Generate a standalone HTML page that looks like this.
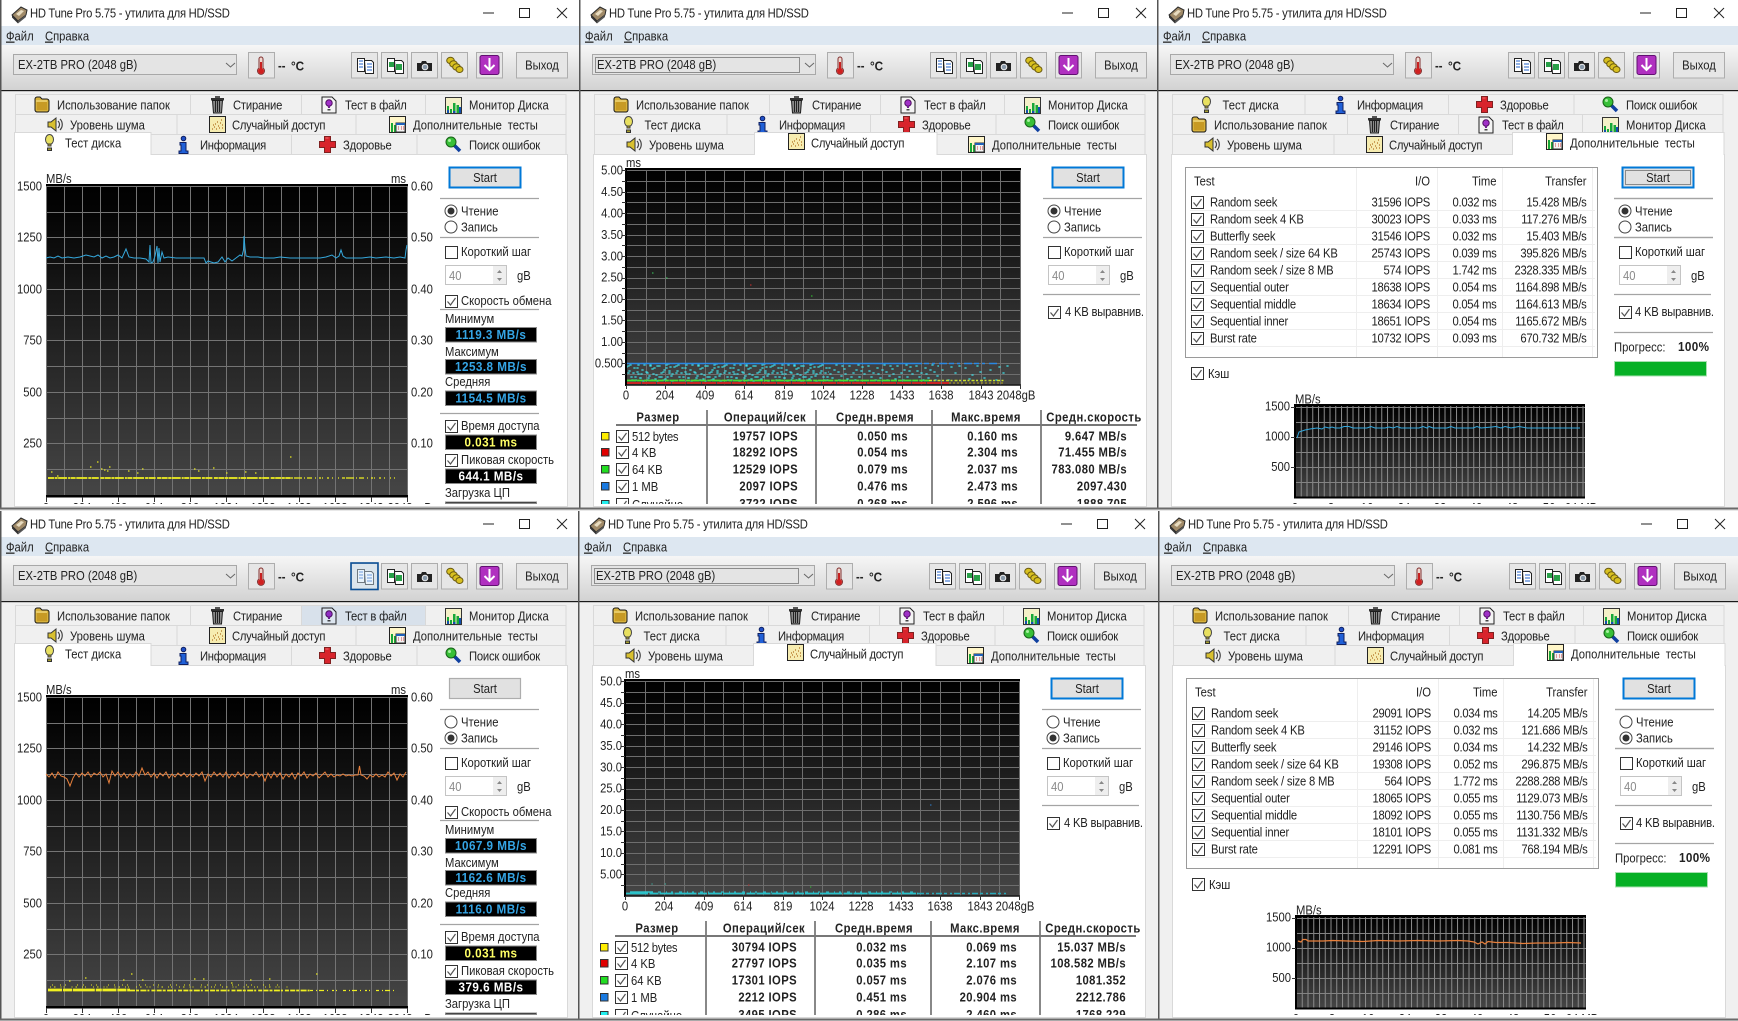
<!DOCTYPE html>
<html lang="ru"><head><meta charset="utf-8"><title>HD Tune Pro 5.75</title>
<style>
html,body{margin:0;padding:0;background:#e8e8e8;width:1738px;height:1021px;overflow:hidden}
svg{display:block;filter:blur(.35px)}
text{font:12.5px "Liberation Sans","Noto Sans CJK SC",sans-serif;fill:#222;transform-box:fill-box;transform:scaleX(.9);transform-origin:0 50%}
.e{text-anchor:end;transform-origin:100% 50%}
.m{text-anchor:middle;transform-origin:50% 50%}
.b{font-weight:bold}
.n{letter-spacing:-.3px}
.bn{font-weight:bold;letter-spacing:.45px}
.v{font-weight:bold;font-size:13px;letter-spacing:.5px}
.g{fill:#8a8a8a}
.bl{fill:#35a5e5}.ye{fill:#ffff66}.wh{fill:#fff}
.s{letter-spacing:-.32px}
.q{letter-spacing:-.22px}
</style></head><body>
<svg xmlns="http://www.w3.org/2000/svg" width="1738" height="1021" viewBox="0 0 1738 1021">
<defs>
<linearGradient id="tb" x1="0" y1="0" x2="0" y2="1"><stop offset="0" stop-color="#f6f6f6"/><stop offset="1" stop-color="#d2d2d2"/></linearGradient>
<linearGradient id="dk" x1="0" y1="0" x2="0" y2="1"><stop offset="0" stop-color="#000"/><stop offset=".1" stop-color="#050505"/><stop offset="1" stop-color="#464646"/></linearGradient>
<clipPath id="cl"><rect x="0" y="150" width="580" height="354"/></clipPath>
<pattern id="p1" width="48" height="19" patternUnits="userSpaceOnUse" x="47" y="364"><path d="M2 2h1M7 9h1M11 4h1M14 14h1M18 1h1M20 8h1M23 12h1M26 5h1M29 15h1M31 2h1M35 9h1M38 6h1M41 13h1M44 3h1M46 10h1M5 13h1M9 16h1M16 6h1M24 2h1M33 13h1M40 1h1M12 10h1M27 10h1M3 7h1M37 16h1M21 16h1M43 7h1" stroke="#3de0e8" stroke-width="1.300" stroke-linecap="square"/></pattern>
<pattern id="p1b" width="48" height="19" patternUnits="userSpaceOnUse" x="66" y="371"><path d="M2 2h1M7 9h1M11 4h1M14 14h1M18 1h1M20 8h1M23 12h1M26 5h1M29 15h1M31 2h1M35 9h1M38 6h1M41 13h1M44 3h1M46 10h1M5 13h1M9 16h1M16 6h1M24 2h1M33 13h1M40 1h1M12 10h1M27 10h1M3 7h1M37 16h1M21 16h1M43 7h1" stroke="#3de0e8" stroke-width="1.300" stroke-linecap="square"/></pattern>
<pattern id="p2" width="48" height="19" patternUnits="userSpaceOnUse" x="47" y="364"><path d="M3 4h1M10 11h1M15 2h1M22 14h1M28 6h1M34 16h1M41 9h1M45 2h1M18 8h1M7 15h1M37 3h1" stroke="#3de0e8" stroke-width="1.200" stroke-linecap="square"/></pattern>
<pattern id="vs" width="5.75" height="110" patternUnits="userSpaceOnUse" x="138" y="404"><path d="M.5 0V110" stroke="#8c8c8c" stroke-width="1"/></pattern>

<!-- icons -->
<g id="hdd"><path d="M1 10 10 2l6 3-1 5-8 6z" fill="#a08a68" stroke="#2a2a2a"/><path d="M5 9l5-4 3 1-5 5z" fill="#e8dcc0"/><path d="M1 10l6 6v2.500l-6-6z" fill="#333"/><path d="M7 16l8-6v2l-8 6.500z" fill="#555"/></g>
<g id="folder"><path d="M1 3C1 2 2 1 3 1h3l2 2h5c1 0 2 1 2 2v9c0 1-1 2-2 2H3c-1 0-2-1-2-2z" fill="#d8b23c" stroke="#1a1a1a"/><path d="M3 6h10v8H3z" fill="#c79a24"/><path d="M2 5h11" stroke="#f6e390"/></g>
<g id="trash"><path d="M1 2h13v2.500H1z" fill="#333"/><path d="M5 0h5v2H5z" fill="#555"/><path d="M2.500 4.500h10L11.500 17h-8z" fill="#8a8a8a" stroke="#1c1c1c"/><path d="M5.500 5v11M7.500 5v11M9.500 5v11" stroke="#222"/></g>
<g id="file"><path d="M1 1h10l4 4v12H1z" fill="#f4f4f4" stroke="#222"/><circle cx="8" cy="7" r="3.200" fill="#a030c8" stroke="#501060"/><path d="M7 10h2v2H7z" fill="#702090"/><path d="M6.500 13h3v1.500h-3z" fill="#444"/></g>
<g id="mon"><rect x=".5" y=".5" width="16" height="16" fill="#f4f0c8" stroke="#333"/><path d="M2 16V9h2v7zM5 16v-4h2v4zM8 16V6h2.500v10zM11.500 16V8H14v8z" fill="#18a838"/><path d="M2 16v-3h2v3zM8 16v-2h2.500v2z" fill="#1050b0"/><path d="M14 16v-6h2v6z" fill="#1050b0"/></g>
<g id="spk"><path d="M1 5h3l5-4v13L4 10H1z" fill="#d8c030" stroke="#333"/><path d="M11 4c2 2 2 5 0 7M13 2c3 3 3 8 0 11" fill="none" stroke="#444" stroke-width="1.200"/></g>
<g id="rand"><rect x=".5" y=".5" width="16" height="16" fill="#f6ecb0" stroke="#222"/><path d="M3 13h1M5 11h1M7 13h1M6 8h1M9 10h1M11 7h1M10 12h1M12 4h1M13 9h1M8 6h1M4 9h1M13 12h1" stroke="#b07020" stroke-width="1.200"/></g>
<g id="extra"><rect x=".5" y=".5" width="16" height="16" fill="#fff6c8" stroke="#222"/><path d="M2 16V7h2v9zM5 16V9h2v7z" fill="#18a838"/><path d="M7 7h9v9H7z" fill="#f4f4f4" stroke="#333"/><path d="M7 7h9v2H7z" fill="#2060b8"/><path d="M9 11h1M12 11h1M14 11h1M9 13h1M12 13h1M14 13h1" stroke="#d04040"/></g>
<g id="bulb"><ellipse cx="4.500" cy="5.500" rx="4" ry="5" fill="#e8e060" stroke="#444"/><path d="M3 10h3v2H3z" fill="#b8a820" stroke="#444"/><path d="M2.500 14h4v2.500h-4z" fill="#a8a030" stroke="#333"/></g>
<g id="info"><circle cx="4.500" cy="2.500" r="2.300" fill="#2050c8" stroke="#102060"/><path d="M1 6.500h6V15h2v2.500H0V15h2V9H1z" fill="#2060d8" stroke="#102060"/></g>
<g id="cross"><path d="M5.500 .5h6v5h5v6h-5v5h-6v-5h-5v-6h5z" fill="#d8242c" stroke="#802020"/><path d="M6.500 2h3" stroke="#f07070"/></g>
<g id="mag"><path d="M9 9l6 6" stroke="#1040a0" stroke-width="3.500"/><circle cx="6" cy="6" r="5" fill="#38c038" stroke="#186018"/><circle cx="4.500" cy="4.500" r="1.500" fill="#a8f0a0"/></g>
<g id="chk"><rect x=".5" y=".5" width="12" height="12" fill="#fff" stroke="#333"/><path d="M2.500 6.500l3 3.500 5-7" fill="none" stroke="#555" stroke-width="1.200"/></g>
<rect id="box" x=".5" y=".5" width="12" height="12" fill="#fff" stroke="#333"/>

<!-- window chrome -->
<g id="chrome">
<rect width="582" height="509" fill="#f0f0f0"/>
<rect width="582" height="26" fill="#fff"/>
<rect y="26" width="582" height="19" fill="#dde7f1"/>
<rect y="45" width="582" height="45" fill="url(#tb)"/>
<rect y="90" width="582" height="1.200" fill="#1a1a1a"/>
<rect y="0" width="1.500" height="509" fill="#555"/>
<rect y="507.500" width="582" height="2" fill="#6a6a6a"/>
<use href="#hdd" x="11" y="5"/>
<text x="30" y="17.500" style="letter-spacing:-.28px">HD Tune Pro 5.75 - утилита для HD/SSD</text>
<path d="M483 13h11M519.500 8.500h10v9h-10zM557 8l10 10M567 8l-10 10" fill="none" stroke="#222"/>
<text x="6" y="40.500"><tspan text-decoration="underline">Ф</tspan>айл</text>
<text x="45" y="40.500"><tspan text-decoration="underline">С</tspan>правка</text>
<rect x="13.500" y="54.500" width="223" height="20" fill="#e4e4e4" stroke="#a8a8a8"/>
<text x="18" y="69">EX-2TB PRO (2048 gB)</text>
<path d="M226 63l4.500 4 4.500-4" fill="none" stroke="#666"/>
<rect x="248.500" y="52.500" width="26" height="25.500" fill="#e6e6e6" stroke="#adadad"/>
<path d="M259 59a2 2 0 014 0v9a3.500 3.500 0 11-4 0z" fill="#f0d8d0" stroke="#803030"/><path d="M260 62h2v7h-2z" fill="#c82020"/><circle cx="261" cy="71" r="3" fill="#d02020"/>
<text x="278" y="70" class="b">--</text><text x="291" y="70.500" class="b" style="font-size:13px">°C</text>
<g fill="#e6e6e6" stroke="#adadad">
<rect x="351.500" y="52.500" width="26" height="25.500"/><rect x="381.500" y="52.500" width="26" height="25.500"/><rect x="411.500" y="52.500" width="26" height="25.500"/><rect x="441.500" y="52.500" width="26" height="25.500"/><rect x="476.500" y="52.500" width="26" height="25.500"/><rect x="516.500" y="52.500" width="51" height="25.500"/>
</g>
<path d="M357.500 58.500h7v13h-7z" fill="#fff" stroke="#222"/><path d="M364.500 60.500h7l2 2v11h-8z" fill="#fff" stroke="#222"/><path d="M359 61h4M359 64h4M359 67h4M367 64h5M367 67h5M367 70h5" stroke="#2060c8"/>
<path d="M387.500 58.500h7v13h-7z" fill="#fff" stroke="#222"/><path d="M394.500 60.500h7l2 2v11h-8z" fill="#fff" stroke="#222"/><path d="M389 62h5v5h-5zM396 64h6v6h-6z" fill="#28a048"/>
<path d="M417 63h4l1-2h4l1 2h5v8h-15z" fill="#222"/><circle cx="425" cy="67" r="2.800" fill="#8898a8" stroke="#eee"/>
<g fill="#d8c020" stroke="#6a5a10"><ellipse cx="450.500" cy="60.500" rx="3.800" ry="3.200"/><ellipse cx="453.500" cy="64" rx="3.800" ry="3.200"/><ellipse cx="456.500" cy="67" rx="3.800" ry="3.200"/><ellipse cx="459.500" cy="69.500" rx="3.500" ry="3"/></g>
<rect x="480" y="55.500" width="19" height="19" rx="2" fill="#b030c0" stroke="#601070"/><path d="M489.500 58v12M484.500 65l5 5 5-5" fill="none" stroke="#fff" stroke-width="2"/>
<text x="542" y="69.500" class="m">Выход</text>
<rect x="14.500" y="154.500" width="553" height="352" fill="#fff" stroke="#d9d9d9"/>
</g>

<!-- tab rows -->
<g id="ta"><rect x="15.500" y=".5" width="550.500" height="20" fill="#f0f0f0" stroke="#d9d9d9"/><path d="M190.500 .5v20M301.500 .5v20M425.500 .5v20" stroke="#d9d9d9"/>
<use href="#folder" x="34" y="2"/><text x="57" y="15.500">Использование папок</text>
<use href="#trash" x="210" y="2"/><text x="233" y="15.500" class="q">Стирание</text>
<use href="#file" x="321" y="2"/><text x="345" y="15.500" class="q">Тест в файл</text>
<use href="#mon" x="445" y="3"/><text x="469" y="15.500">Монитор Диска</text></g>
<g id="tbr"><rect x="15.500" y=".5" width="550.500" height="20" fill="#f0f0f0" stroke="#d9d9d9"/><path d="M177 .5v20M356 .5v20" stroke="#d9d9d9"/>
<use href="#spk" x="47" y="3"/><text x="70" y="15.500">Уровень шума</text>
<use href="#rand" x="209" y="2"/><text x="232" y="15.500" class="s">Случайный доступ</text>
<use href="#extra" x="389" y="2"/><text x="413" y="15.500" style="word-spacing:3px">Дополнительные тесты</text></g>
<g id="tc"><rect x="15.500" y=".5" width="550.500" height="20" fill="#f0f0f0" stroke="#d9d9d9"/><path d="M148 .5v20M291.500 .5v20M417 .5v20" stroke="#d9d9d9"/>
<use href="#bulb" x="45" y="2"/><text x="65.500" y="15.500">Тест диска</text>
<use href="#info" x="179" y="2"/><text x="200" y="15.500" class="s">Информация</text>
<use href="#cross" x="319" y="2"/><text x="343" y="15.500" class="q">Здоровье</text>
<use href="#mag" x="445" y="2"/><text x="469" y="15.500" class="q">Поиск ошибок</text></g>
<g id="r3a"><rect x="151" y=".5" width="415" height="20" fill="#f0f0f0" stroke="#d9d9d9"/><path d="M291.500 .5v20M417 .5v20" stroke="#d9d9d9"/>
<path d="M14.500 20.500V-1.500H151V20.500" fill="#fff" stroke="#d9d9d9"/><rect x="15" y="18" width="135.500" height="3" fill="#fff"/>
<use href="#bulb" x="45" y="0"/><text x="65" y="13.500">Тест диска</text>
<use href="#info" x="179" y="2"/><text x="200" y="15.500" class="s">Информация</text>
<use href="#cross" x="319" y="2"/><text x="343" y="15.500" class="q">Здоровье</text>
<use href="#mag" x="445" y="2"/><text x="469" y="15.500" class="q">Поиск ошибок</text></g>
<g id="r3b"><rect x="15.500" y=".5" width="550.500" height="20" fill="#f0f0f0" stroke="#d9d9d9"/>
<path d="M175.500 20.500V-1.500H358V20.500" fill="#fff" stroke="#d9d9d9"/><rect x="176" y="18" width="181.500" height="3" fill="#fff"/>
<use href="#spk" x="47" y="3"/><text x="70" y="15.500">Уровень шума</text>
<use href="#rand" x="209" y="-1"/><text x="232" y="13.500" class="s">Случайный доступ</text>
<use href="#extra" x="389" y="2"/><text x="413" y="15.500" style="word-spacing:3px">Дополнительные тесты</text></g>
<g id="r3c"><rect x="15.500" y=".5" width="340" height="20" fill="#f0f0f0" stroke="#d9d9d9"/><path d="M177 .5v20" stroke="#d9d9d9"/>
<path d="M355.500 20.500V-1.500H567V20.500" fill="#fff" stroke="#d9d9d9"/><rect x="356" y="18" width="210.500" height="3" fill="#fff"/>
<use href="#spk" x="47" y="3"/><text x="70" y="15.500">Уровень шума</text>
<use href="#rand" x="209" y="2"/><text x="232" y="15.500" class="s">Случайный доступ</text>
<use href="#extra" x="389" y="-1"/><text x="413" y="13.500" style="word-spacing:3px">Дополнительные тесты</text></g>

<!-- right column -->
<g id="rc">
<path d="M440 198.500h99M440 237.500h99" stroke="#a4a4a4" stroke-width="1.200"/>
<circle cx="451" cy="211" r="6" fill="#fff" stroke="#444"/><circle cx="451" cy="227" r="6" fill="#fff" stroke="#444"/>
<text x="461" y="215.500">Чтение</text><text x="461" y="231.500">Запись</text>
<use href="#box" x="445" y="246"/><text x="461" y="256">Короткий шаг</text>
<rect x="445.500" y="265.500" width="61" height="19" fill="#fff" stroke="#c4c4c4"/><rect x="493" y="266" width="13" height="18" fill="#eee"/><path d="M497 273l2.500-3 2.500 3zM497 278l2.500 3 2.500-3z" fill="#888"/>
<text x="449" y="280" class="g">40</text><text x="517" y="280">gB</text>
</g>
<g id="k4"><path d="M440 294.500h97" stroke="#a4a4a4" stroke-width="1.200"/><use href="#chk" x="445" y="306"/><text x="462" y="316" class="q">4 KB выравнив.</text></g>
<g id="rs"><use href="#chk" x="445" y="295"/><text x="461" y="305">Скорость обмена</text><path d="M440 309.500h99M440 413.500h99" stroke="#a4a4a4" stroke-width="1.200"/>
<text x="445" y="323">Минимум</text><text x="445" y="356">Максимум</text><text x="445" y="386">Средняя</text>
<use href="#chk" x="445" y="420"/><text x="461" y="430">Время доступа</text><use href="#chk" x="445" y="454"/><text x="461" y="464">Пиковая скорость</text><text x="445" y="497">Загрузка ЦП</text>
<g fill="#000" stroke="#8a8a8a"><rect x="445.500" y="327.500" width="91" height="14.500"/><rect x="445.500" y="359.500" width="91" height="14.500"/><rect x="445.500" y="391" width="91" height="14.500"/><rect x="445.500" y="435" width="91" height="14.500"/><rect x="445.500" y="469" width="91" height="14.500"/><rect x="445.500" y="502" width="91" height="1.500"/></g>
</g>

<!-- chart 1 -->
<g id="c1">
<rect x="46" y="184" width="361" height="313" fill="url(#dk)"/>
<path d="M46.500 184V497M64.500 184V497M82.500 184V497M100.500 184V497M118.500 184V497M136.500 184V497M154.500 184V497M172.500 184V497M190.500 184V497M208.500 184V497M226.500 184V497M244.500 184V497M263.500 184V497M281.500 184V497M299.500 184V497M317.500 184V497M335.500 184V497M353.500 184V497M371.500 184V497M389.500 184V497M407.500 184V497M46 186.500H408M46 212.500H408M46 237.500H408M46 263.500H408M46 289.500H408M46 315.500H408M46 340.500H408M46 366.500H408M46 392.500H408M46 418.500H408M46 443.500H408M46 469.500H408M46 495.500H408" stroke="#747474"/>
<rect x="46" y="184" width="362" height="2" fill="#000"/><rect x="46" y="495" width="362" height="2.500" fill="#000"/>
<text x="46" y="183">MB/s</text><text x="406" y="183" class="e">ms</text>
<text x="42" y="190.500" class="e">1500</text><text x="42" y="241.500" class="e">1250</text><text x="42" y="293.500" class="e">1000</text><text x="42" y="344.500" class="e">750</text><text x="42" y="396.500" class="e">500</text><text x="42" y="447.500" class="e">250</text>
<text x="411" y="190.500">0.60</text><text x="411" y="241.500">0.50</text><text x="411" y="293.500">0.40</text><text x="411" y="344.500">0.30</text><text x="411" y="396.500">0.20</text><text x="411" y="447.500">0.10</text>
<g clip-path="url(#cl)"><path d="M46.500 497v5M82.500 497v5M118.500 497v5M154.500 497v5M190.500 497v5M226.500 497v5M263.500 497v5M299.500 497v5M335.500 497v5M371.500 497v5M407.500 497v5" stroke="#333"/>
<text x="46" y="512" class="m">0</text><text x="82" y="512" class="m">204</text><text x="118" y="512" class="m">409</text><text x="154" y="512" class="m">614</text><text x="190" y="512" class="m">819</text><text x="226" y="512" class="m">1024</text><text x="263" y="512" class="m">1228</text><text x="299" y="512" class="m">1433</text><text x="335" y="512" class="m">1638</text><text x="371" y="512" class="m">1843</text><text x="400" y="512" class="m">2048</text><text x="418" y="512">gB</text></g>
</g>

<!-- chart 2 grid -->
<g id="c2">
<rect x="47" y="168" width="394" height="217" fill="url(#dk)"/>
<path d="M47.500 168V385M67.500 168V385M86.500 168V385M106.500 168V385M126.500 168V385M145.500 168V385M165.500 168V385M185.500 168V385M205.500 168V385M224.500 168V385M244.500 168V385M264.500 168V385M283.500 168V385M303.500 168V385M323.500 168V385M342.500 168V385M362.500 168V385M382.500 168V385M402.500 168V385M421.500 168V385M441.500 168V385M47 170.500H442M47 181.500H442M47 192.500H442M47 202.500H442M47 213.500H442M47 224.500H442M47 235.500H442M47 245.500H442M47 256.500H442M47 267.500H442M47 278.500H442M47 288.500H442M47 299.500H442M47 310.500H442M47 320.500H442M47 331.500H442M47 342.500H442M47 353.500H442M47 363.500H442M47 374.500H442" stroke="#6e6e6e"/>
<rect x="47" y="168" width="395" height="2" fill="#000"/><rect x="46" y="168" width="2" height="218" fill="#000"/><rect x="46" y="384.500" width="396" height="1.200" fill="#000"/>
<path d="M43 170.500h4M43 181.500h4M43 192.500h4M43 202.500h4M43 213.500h4M43 224.500h4M43 235.500h4M43 245.500h4M43 256.500h4M43 267.500h4M43 278.500h4M43 288.500h4M43 299.500h4M43 310.500h4M43 320.500h4M43 331.500h4M43 342.500h4M43 353.500h4M43 363.500h4M43 374.500h4M47.500 385v4M86.500 385v4M126.500 385v4M165.500 385v4M205.500 385v4M244.500 385v4M283.500 385v4M323.500 385v4M362.500 385v4M402.500 385v4M441.500 385v4" stroke="#333"/>
<text x="47" y="167">ms</text>
<text x="47" y="399.500" class="m">0</text><text x="86" y="399.500" class="m">204</text><text x="126" y="399.500" class="m">409</text><text x="165" y="399.500" class="m">614</text><text x="205" y="399.500" class="m">819</text><text x="244" y="399.500" class="m">1024</text><text x="283" y="399.500" class="m">1228</text><text x="323" y="399.500" class="m">1433</text><text x="362" y="399.500" class="m">1638</text><text x="402" y="399.500" class="m">1843</text><text x="437" y="399.500" class="m">2048gB</text>
</g>

<!-- IOPS table frame -->
<g id="tbl" clip-path="url(#cl)">
<path d="M128 410V504M237 410V504M353 410V504M462 410V504" stroke="#6a6a6a" stroke-width="1.600"/><path d="M37 425h521" stroke="#777" stroke-width="2"/>
<text x="79" y="421.500" class="m b" style="letter-spacing:.5px">Размер</text><text x="186" y="421.500" class="m b" style="letter-spacing:.5px">Операций/сек</text><text x="296" y="421.500" class="m b" style="letter-spacing:.5px">Средн.время</text><text x="407" y="421.500" class="m b" style="letter-spacing:.5px">Макс.время</text><text x="515" y="421.500" class="m b" style="letter-spacing:.5px">Средн.скорость</text>
<g stroke="#333"><rect x="22.500" y="432.500" width="7.500" height="7.500" fill="#ffee00"/><rect x="22.500" y="448.500" width="7.500" height="7.500" fill="#e00000"/><rect x="22.500" y="465.500" width="7.500" height="7.500" fill="#22dd22"/><rect x="22.500" y="482.500" width="7.500" height="7.500" fill="#1a7ae0"/><rect x="22.500" y="500.500" width="7.500" height="7.500" fill="#22eeee"/></g>
<use href="#chk" x="37" y="430"/><use href="#chk" x="37" y="446"/><use href="#chk" x="37" y="463"/><use href="#chk" x="37" y="480"/><use href="#chk" x="37" y="498"/>
<text x="53" y="441" class="n">512 bytes</text><text x="53" y="457">4 KB</text><text x="53" y="474">64 KB</text><text x="53" y="491">1 MB</text><text x="53" y="509">Случайно</text>
</g>

<!-- extra tests table frame -->
<g id="t3">
<rect x="28.500" y="167.500" width="412" height="190" fill="#fff" stroke="#9a9a9a"/>
<path d="M33 210.500h405M33 227.500h405M33 244.500h405M33 261.500h405M33 278.500h405M33 295.500h405M33 312.500h405M33 329.500h405M33 346.500h405M199.500 168v189M280.500 168v189M345.500 168v189M435.500 168v189" stroke="#eeeeee"/>
<text x="37" y="185.500">Test</text><text x="273" y="185.500" class="e">I/O</text><text x="339.500" y="185.500" class="e">Time</text><text x="429.500" y="185.500" class="e">Transfer</text>
<use href="#chk" x="34" y="196"/><use href="#chk" x="34" y="213"/><use href="#chk" x="34" y="230"/><use href="#chk" x="34" y="247"/><use href="#chk" x="34" y="264"/><use href="#chk" x="34" y="281"/><use href="#chk" x="34" y="298"/><use href="#chk" x="34" y="315"/><use href="#chk" x="34" y="332"/>
<g class="q"><text x="53" y="206.500">Random seek</text><text x="53" y="223.500">Random seek 4 KB</text><text x="53" y="240.500">Butterfly seek</text><text x="53" y="257.500">Random seek / size 64 KB</text><text x="53" y="274.500">Random seek / size 8 MB</text><text x="53" y="291.500">Sequential outer</text><text x="53" y="308.500">Sequential middle</text><text x="53" y="325.500">Sequential inner</text><text x="53" y="342.500">Burst rate</text></g>
<use href="#chk" x="34" y="367"/><text x="51" y="378">Кэш</text>
<path d="M457 198.500h99M457 237.500h99M457 294.500h97M457 332.500h99" stroke="#a4a4a4" stroke-width="1.200"/>
<text x="457" y="351.500">Прогресс:</text><text x="521" y="351" class="b" style="font-size:13px;letter-spacing:.4px">100%</text>
<rect x="457.500" y="361.500" width="92" height="14.500" fill="#06b025" stroke="#a8e0b0"/>
<g clip-path="url(#cl)"><rect x="138" y="404" width="290" height="94" fill="url(#dk)"/><rect x="138" y="404" width="290" height="94" fill="url(#vs)"/>
<path d="M138 407.500H428M138 422.500H428M138 437.500H428M138 452.500H428M138 467.500H428M138 482.500H428" stroke="#838383"/>
<rect x="137" y="404" width="291" height="2" fill="#000"/><rect x="137" y="404" width="2" height="94" fill="#000"/><rect x="137" y="496.500" width="291" height="2" fill="#000"/>
<path d="M134 407.500h4M134 437.500h4M134 467.500h4" stroke="#333"/>
<text x="138" y="403.500">MB/s</text><text x="133" y="410.500" class="e">1500</text><text x="133" y="440.500" class="e">1000</text><text x="133" y="471" class="e">500</text>
<text x="138" y="512" class="m">0</text><text x="174" y="512" class="m">8</text><text x="210" y="512" class="m">16</text><text x="247" y="512" class="m">24</text><text x="283" y="512" class="m">32</text><text x="319" y="512" class="m">40</text><text x="355" y="512" class="m">48</text><text x="392" y="512" class="m">56</text><text x="424" y="512" class="m">64 MB</text></g>
</g>
</defs>

<!-- WINDOW 1 -->
<g transform="translate(0,0)">
<use href="#chrome"/><use href="#ta" y="94"/><use href="#tbr" y="114"/><use href="#r3a" y="134"/>
<use href="#c1"/>
<polyline fill="none" stroke="#35a8dc" points="46,258 50,257 54,258 58,256 62,258 68,257 74,258 80,257 86,255 90,256 94,257 98,255 102,258 106,256 110,258 114,257 118,255 122,258 126,249 129,257 134,258 140,258 146,259 149,262 150,245 151,263 153,262 155,256 157,246 158,263 159,248 160,262 162,252 164,258 168,257 176,258 184,258 190,258 196,258 204,258 206,263 208,261 211,262 214,263 218,262 222,257 225,262 228,258 232,261 236,258 240,255 242,256 243.500,250 244,236 245,248 246,256 250,257 258,257 264,258 274,258 280,257 290,258 300,258 310,258 320,258 326,257 332,255 336,258 339,256 341,250 343,256 346,258 354,258 362,258 370,257 376,258 386,257 394,258 400,257 405,258 406,250 407,245"/>
<path d="M48 478H290" stroke="#f0f020" stroke-width="1.800" stroke-dasharray="6 .6 3 .5 9 1 2 .5 5 .7 11 1 3 .5 7 1.500 4 .5"/>
<path d="M290 478H395" stroke="#f0f020" stroke-width="1.300" stroke-dasharray="3 1 8 2 1 2 5 3 1 3 2 1 1 4 2 3 1 5 1 3"/>
<path d="M51 472h1.500M57 476h1.500M90 467h1.500M97 462h1.500M101 469h1.500M104 470h1.500M107 471h1.500M109 467h1.500M128 471h1.500M137 473h1.500M142 469h1.500M194 469h1.500M198 471h1.500M213 468h1.500M226 473h1.500M245 472h1.500M255 473h1.500M290 457h1.500" stroke="#e8e820" stroke-width="1.200"/>
<rect x="449.500" y="167.500" width="71" height="20" fill="#e1e1e1" stroke="#0078d7" stroke-width="2"/><text x="485" y="182" class="m">Start</text>
<use href="#rc"/><circle cx="451" cy="211" r="3.500" fill="#333"/><use href="#rs"/>
<g class="v"><text x="491" y="339" class="m v bl">1119.3 MB/s</text><text x="491" y="371" class="m v bl">1253.8 MB/s</text><text x="491" y="402.500" class="m v bl">1154.5 MB/s</text><text x="491" y="446.500" class="m v ye">0.031 ms</text><text x="491" y="480.500" class="m v wh">644.1 MB/s</text></g>
</g>

<!-- WINDOW 2 -->
<g transform="translate(579,0)">
<use href="#chrome"/><rect x="16.500" y="57.500" width="204" height="15" fill="none" stroke="#333" stroke-dasharray="1 1"/>
<use href="#ta" y="94"/><use href="#tc" y="114"/><use href="#r3b" y="134"/>
<use href="#c2"/>
<text x="44" y="174.500" class="e">5.00</text><text x="44" y="196" class="e">4.50</text><text x="44" y="217.500" class="e">4.00</text><text x="44" y="239" class="e">3.50</text><text x="44" y="260.500" class="e">3.00</text><text x="44" y="281.500" class="e">2.50</text><text x="44" y="303" class="e">2.00</text><text x="44" y="324.500" class="e">1.50</text><text x="44" y="346" class="e">1.00</text><text x="44" y="367.500" class="e">0.500</text>
<rect x="48" y="364" width="202" height="18" fill="url(#p1)"/><rect x="48" y="364" width="202" height="18" fill="url(#p1b)"/><rect x="250" y="364" width="110" height="18" fill="url(#p1)"/><rect x="360" y="364" width="70" height="18" fill="url(#p2)"/>
<path d="M48 363.500H335" stroke="#2a88e4" stroke-width="1.600"/><path d="M335 363.500H418" stroke="#2a88e4" stroke-width="1.400" stroke-dasharray="8 2 5 3 3 4"/>
<path d="M48 380.500H350" stroke="#44e033" stroke-width="1.800" stroke-dasharray="9 .6 6 1 4 .6"/><path d="M350 380.500H425" stroke="#c8e030" stroke-width="1.400" stroke-dasharray="3 1.500 2 2"/>
<path d="M48 383H370" stroke="#c82424" stroke-width="2" stroke-dasharray="14 1"/><path d="M370 383H425" stroke="#a09020" stroke-width="1.200" stroke-dasharray="2 2"/>
<path d="M73 273h1.500M87 278h1.500" stroke="#3cd060"/><path d="M171 285h1.500" stroke="#d03030"/><path d="M232 296h1.500" stroke="#30d030"/>
<rect x="473.500" y="167.500" width="71" height="20" fill="#e1e1e1" stroke="#0078d7" stroke-width="2"/><text x="509" y="182" class="m">Start</text>
<g transform="translate(24,0)"><use href="#rc"/><circle cx="451" cy="211" r="3.500" fill="#333"/><use href="#k4"/></g>
<use href="#tbl"/>
<g clip-path="url(#cl)">
<text x="219" y="440.500" class="e bn">19757 IOPS</text><text x="219" y="456.500" class="e bn">18292 IOPS</text><text x="219" y="473.500" class="e bn">12529 IOPS</text><text x="219" y="490.500" class="e bn">2097 IOPS</text><text x="219" y="508" class="e bn">3722 IOPS</text>
<text x="329" y="440.500" class="e bn">0.050 ms</text><text x="329" y="456.500" class="e bn">0.054 ms</text><text x="329" y="473.500" class="e bn">0.079 ms</text><text x="329" y="490.500" class="e bn">0.476 ms</text><text x="329" y="508" class="e bn">0.268 ms</text>
<text x="439" y="440.500" class="e bn">0.160 ms</text><text x="439" y="456.500" class="e bn">2.304 ms</text><text x="439" y="473.500" class="e bn">2.037 ms</text><text x="439" y="490.500" class="e bn">2.473 ms</text><text x="439" y="508" class="e bn">2.596 ms</text>
<text x="548" y="440.500" class="e bn">9.647 MB/s</text><text x="548" y="456.500" class="e bn">71.455 MB/s</text><text x="548" y="473.500" class="e bn">783.080 MB/s</text><text x="548" y="490.500" class="e bn">2097.430</text><text x="548" y="508" class="e bn">1888.705</text>
</g>
</g>

<!-- WINDOW 3 -->
<g transform="translate(1157,0)">
<use href="#chrome"/><use href="#tc" y="94"/><use href="#ta" y="114"/><use href="#r3c" y="134"/>
<use href="#t3"/>
<polyline fill="none" stroke="#35a8dc" points="140,438 142,432 145,431 148,430 153,429 160,428 165,429 168,427 172,428 175,427 178,428 183,428 187,426.500 192,426.500 196,428 210,428 214,426.500 218,428 228,428 232,427 236,428 240,426.500 244,428 262,428 266,426.500 270,428 272,426.500 276,428 290,428 294,426.500 298,428 316,428 320,426.500 324,428 335,427 339,426.500 344,428 348,426.500 354,428 362,426.500 370,428 423,428"/>
<rect x="465.500" y="167.500" width="71" height="20" fill="#e1e1e1" stroke="#0078d7" stroke-width="2"/><rect x="468.500" y="170.500" width="65" height="14" fill="none" stroke="#333" stroke-dasharray="1 1"/><text x="501" y="182" class="m">Start</text>
<g transform="translate(17,0)"><use href="#rc"/><circle cx="451" cy="211" r="3.500" fill="#333"/></g>
<use href="#chk" x="462" y="306"/><text x="478" y="316" class="q">4 KB выравнив.</text>
<text x="273" y="206.500" class="e n">31596 IOPS</text><text x="273" y="223.500" class="e n">30023 IOPS</text><text x="273" y="240.500" class="e n">31546 IOPS</text><text x="273" y="257.500" class="e n">25743 IOPS</text><text x="273" y="274.500" class="e n">574 IOPS</text><text x="273" y="291.500" class="e n">18638 IOPS</text><text x="273" y="308.500" class="e n">18634 IOPS</text><text x="273" y="325.500" class="e n">18651 IOPS</text><text x="273" y="342.500" class="e n">10732 IOPS</text>
<text x="339.500" y="206.500" class="e n">0.032 ms</text><text x="339.500" y="223.500" class="e n">0.033 ms</text><text x="339.500" y="240.500" class="e n">0.032 ms</text><text x="339.500" y="257.500" class="e n">0.039 ms</text><text x="339.500" y="274.500" class="e n">1.742 ms</text><text x="339.500" y="291.500" class="e n">0.054 ms</text><text x="339.500" y="308.500" class="e n">0.054 ms</text><text x="339.500" y="325.500" class="e n">0.054 ms</text><text x="339.500" y="342.500" class="e n">0.093 ms</text>
<text x="429.500" y="206.500" class="e n">15.428 MB/s</text><text x="429.500" y="223.500" class="e n">117.276 MB/s</text><text x="429.500" y="240.500" class="e n">15.403 MB/s</text><text x="429.500" y="257.500" class="e n">395.826 MB/s</text><text x="429.500" y="274.500" class="e n">2328.335 MB/s</text><text x="429.500" y="291.500" class="e n">1164.898 MB/s</text><text x="429.500" y="308.500" class="e n">1164.613 MB/s</text><text x="429.500" y="325.500" class="e n">1165.672 MB/s</text><text x="429.500" y="342.500" class="e n">670.732 MB/s</text>
</g>

<!-- WINDOW 4 -->
<g transform="translate(0,511)">
<use href="#chrome"/>
<rect x="351" y="52" width="27" height="26.500" fill="#cfe4f7" fill-opacity=".45" stroke="#0a4f96" stroke-width="1.600"/>
<use href="#ta" y="94"/><rect x="302" y="95" width="123" height="19" fill="#e6f0fa" style="mix-blend-mode:multiply"/><use href="#tbr" y="114"/><use href="#r3a" y="134"/>
<use href="#c1"/>
<polyline fill="none" stroke="#e8803c" points="46,263 49,266 52,262 55,267 58,261 61,265 64,266 67,268 70,275 73,267 76,262 79,266 82,262 85,265 88,261 91,266 94,262 97,264 100,261 103,266 106,263 109,272 112,260 115,265 118,261 121,266 124,262 127,267 130,263 133,266 136,261 139,265 142,257 145,264 148,261 151,266 154,262 157,267 160,262 163,265 166,261 169,267 172,263 175,266 178,262 181,265 184,262 187,266 190,263 193,266 196,262 199,265 202,261 205,270 208,263 211,266 214,261 217,265 220,262 223,266 226,261 229,267 232,263 235,266 238,261 241,265 244,262 247,267 250,263 253,265 256,261 259,266 262,263 265,270 268,262 271,267 274,261 277,266 280,262 283,268 286,263 289,266 292,262 295,268 298,262 301,265 304,261 307,267 310,263 313,265 316,262 319,267 322,264 325,261 328,266 331,263 334,266 337,264 340,265 343,263 346,265 349,264 352,265 355,264 358,264 359.500,255 361,264 364,265 367,268 370,264 373,266 376,263 379,266 382,264 385,266 388,261 391,265 394,262 397,269 400,263 403,266 406,261"/>
<path d="M48 479H130" stroke="#f0f020" stroke-width="2.800" stroke-dasharray="14 1 9 .8 22 1 6 .6"/><path d="M130 479.500H310" stroke="#f0f020" stroke-width="1.800" stroke-dasharray="5 1 3 1.400 6 1 2 2 4 1.300"/><path d="M310 479.500H395" stroke="#f0f020" stroke-width="1.300" stroke-dasharray="3 3 1 2 5 3 1 4 2 2 1 6"/>
<path d="M50 476H290" stroke="#e8e820" stroke-dasharray="1 3 1.500 5 1 2 1 7"/><path d="M52 474H280" stroke="#e8e820" stroke-dasharray="1 7 1 4 1 11 1 5"/>
<path d="M69 470h1.500M85 467h1.500M123 469h1.500M131 463h1.500M142 469h1.500M194 468h1.500M203 468h1.500M231 472h1.500M250 469h1.500M269 468h1.500M316 463h1.500" stroke="#e8e820" stroke-width="1.200"/>
<rect x="449.500" y="167.500" width="71" height="20" fill="#e1e1e1" stroke="#adadad" stroke-width="1.200"/><text x="485" y="182" class="m">Start</text>
<use href="#rc"/><circle cx="451" cy="227" r="3.500" fill="#333"/><use href="#rs"/>
<text x="491" y="339" class="m v bl">1067.9 MB/s</text><text x="491" y="371" class="m v bl">1162.6 MB/s</text><text x="491" y="402.500" class="m v bl">1116.0 MB/s</text><text x="491" y="446.500" class="m v ye">0.031 ms</text><text x="491" y="480.500" class="m v wh">379.6 MB/s</text>
</g>

<!-- WINDOW 5 -->
<g transform="translate(578,511)">
<use href="#chrome"/><rect x="16.500" y="57.500" width="204" height="15" fill="none" stroke="#333" stroke-dasharray="1 1"/>
<use href="#ta" y="94"/><use href="#tc" y="114"/><use href="#r3b" y="134"/>
<use href="#c2"/>
<text x="44" y="174.500" class="e">50.0</text><text x="44" y="196" class="e">45.0</text><text x="44" y="217.500" class="e">40.0</text><text x="44" y="239" class="e">35.0</text><text x="44" y="260.500" class="e">30.0</text><text x="44" y="281.500" class="e">25.0</text><text x="44" y="303" class="e">20.0</text><text x="44" y="324.500" class="e">15.0</text><text x="44" y="346" class="e">10.0</text><text x="44" y="367.500" class="e">5.00</text>
<path d="M48 382.500H340" stroke="#28c0c8" stroke-width="1.700" stroke-dasharray="22 1.500 9 1 14 1"/><path d="M340 382.500H430" stroke="#28a8b8" stroke-width="1.400" stroke-dasharray="6 2 3 3 2 2"/><path d="M52 381H75" stroke="#30d8e0" stroke-width="1.300"/><path d="M80 381H340" stroke="#30c8d8" stroke-width="1" stroke-dasharray="3 5 1 4 2 6"/>
<path d="M73.400 373h1.300M86.700 373h1.300" stroke="#3cb0a0"/><path d="M170 374h1.500" stroke="#b03030"/><path d="M232 376h1.300" stroke="#30c030"/><path d="M352 294h1.500" stroke="#3080d0"/>
<rect x="473.500" y="167.500" width="71" height="20" fill="#e1e1e1" stroke="#0078d7" stroke-width="2"/><text x="509" y="182" class="m">Start</text>
<g transform="translate(24,0)"><use href="#rc"/><circle cx="451" cy="227" r="3.500" fill="#333"/><use href="#k4"/></g>
<use href="#tbl"/>
<g clip-path="url(#cl)">
<text x="219" y="440.500" class="e bn">30794 IOPS</text><text x="219" y="456.500" class="e bn">27797 IOPS</text><text x="219" y="473.500" class="e bn">17301 IOPS</text><text x="219" y="490.500" class="e bn">2212 IOPS</text><text x="219" y="508" class="e bn">3495 IOPS</text>
<text x="329" y="440.500" class="e bn">0.032 ms</text><text x="329" y="456.500" class="e bn">0.035 ms</text><text x="329" y="473.500" class="e bn">0.057 ms</text><text x="329" y="490.500" class="e bn">0.451 ms</text><text x="329" y="508" class="e bn">0.286 ms</text>
<text x="439" y="440.500" class="e bn">0.069 ms</text><text x="439" y="456.500" class="e bn">2.107 ms</text><text x="439" y="473.500" class="e bn">2.076 ms</text><text x="439" y="490.500" class="e bn">20.904 ms</text><text x="439" y="508" class="e bn">2.460 ms</text>
<text x="548" y="440.500" class="e bn">15.037 MB/s</text><text x="548" y="456.500" class="e bn">108.582 MB/s</text><text x="548" y="473.500" class="e bn">1081.352</text><text x="548" y="490.500" class="e bn">2212.786</text><text x="548" y="508" class="e bn">1768.229</text>
</g>
</g>

<!-- WINDOW 6 -->
<g transform="translate(1158,511)">
<use href="#chrome"/><use href="#ta" y="94"/><use href="#tc" y="114"/><use href="#r3c" y="134"/>
<use href="#t3"/>
<polyline fill="none" stroke="#e8803c" stroke-width="1.200" points="140,430 143,431 145,428.500 148,428.500 150,430 165,430 175,429.500 190,430 205,430.500 220,429.500 240,430 260,429.500 280,430 300,429.500 310,430 316,431 320,433 324,431 327,433 330,430.500 334,431 338,431.500 350,431.500 365,432.500 380,432 395,432 410,431.500 423,432"/>
<rect x="465.500" y="167.500" width="71" height="20" fill="#e1e1e1" stroke="#0078d7" stroke-width="2"/><text x="501" y="182" class="m">Start</text>
<g transform="translate(17,0)"><use href="#rc"/><circle cx="451" cy="227" r="3.500" fill="#333"/></g>
<use href="#chk" x="462" y="306"/><text x="478" y="316" class="q">4 KB выравнив.</text>
<text x="273" y="206.500" class="e n">29091 IOPS</text><text x="273" y="223.500" class="e n">31152 IOPS</text><text x="273" y="240.500" class="e n">29146 IOPS</text><text x="273" y="257.500" class="e n">19308 IOPS</text><text x="273" y="274.500" class="e n">564 IOPS</text><text x="273" y="291.500" class="e n">18065 IOPS</text><text x="273" y="308.500" class="e n">18092 IOPS</text><text x="273" y="325.500" class="e n">18101 IOPS</text><text x="273" y="342.500" class="e n">12291 IOPS</text>
<text x="339.500" y="206.500" class="e n">0.034 ms</text><text x="339.500" y="223.500" class="e n">0.032 ms</text><text x="339.500" y="240.500" class="e n">0.034 ms</text><text x="339.500" y="257.500" class="e n">0.052 ms</text><text x="339.500" y="274.500" class="e n">1.772 ms</text><text x="339.500" y="291.500" class="e n">0.055 ms</text><text x="339.500" y="308.500" class="e n">0.055 ms</text><text x="339.500" y="325.500" class="e n">0.055 ms</text><text x="339.500" y="342.500" class="e n">0.081 ms</text>
<text x="429.500" y="206.500" class="e n">14.205 MB/s</text><text x="429.500" y="223.500" class="e n">121.686 MB/s</text><text x="429.500" y="240.500" class="e n">14.232 MB/s</text><text x="429.500" y="257.500" class="e n">296.875 MB/s</text><text x="429.500" y="274.500" class="e n">2288.288 MB/s</text><text x="429.500" y="291.500" class="e n">1129.073 MB/s</text><text x="429.500" y="308.500" class="e n">1130.756 MB/s</text><text x="429.500" y="325.500" class="e n">1131.332 MB/s</text><text x="429.500" y="342.500" class="e n">768.194 MB/s</text>
</g>
</svg>
</body></html>
